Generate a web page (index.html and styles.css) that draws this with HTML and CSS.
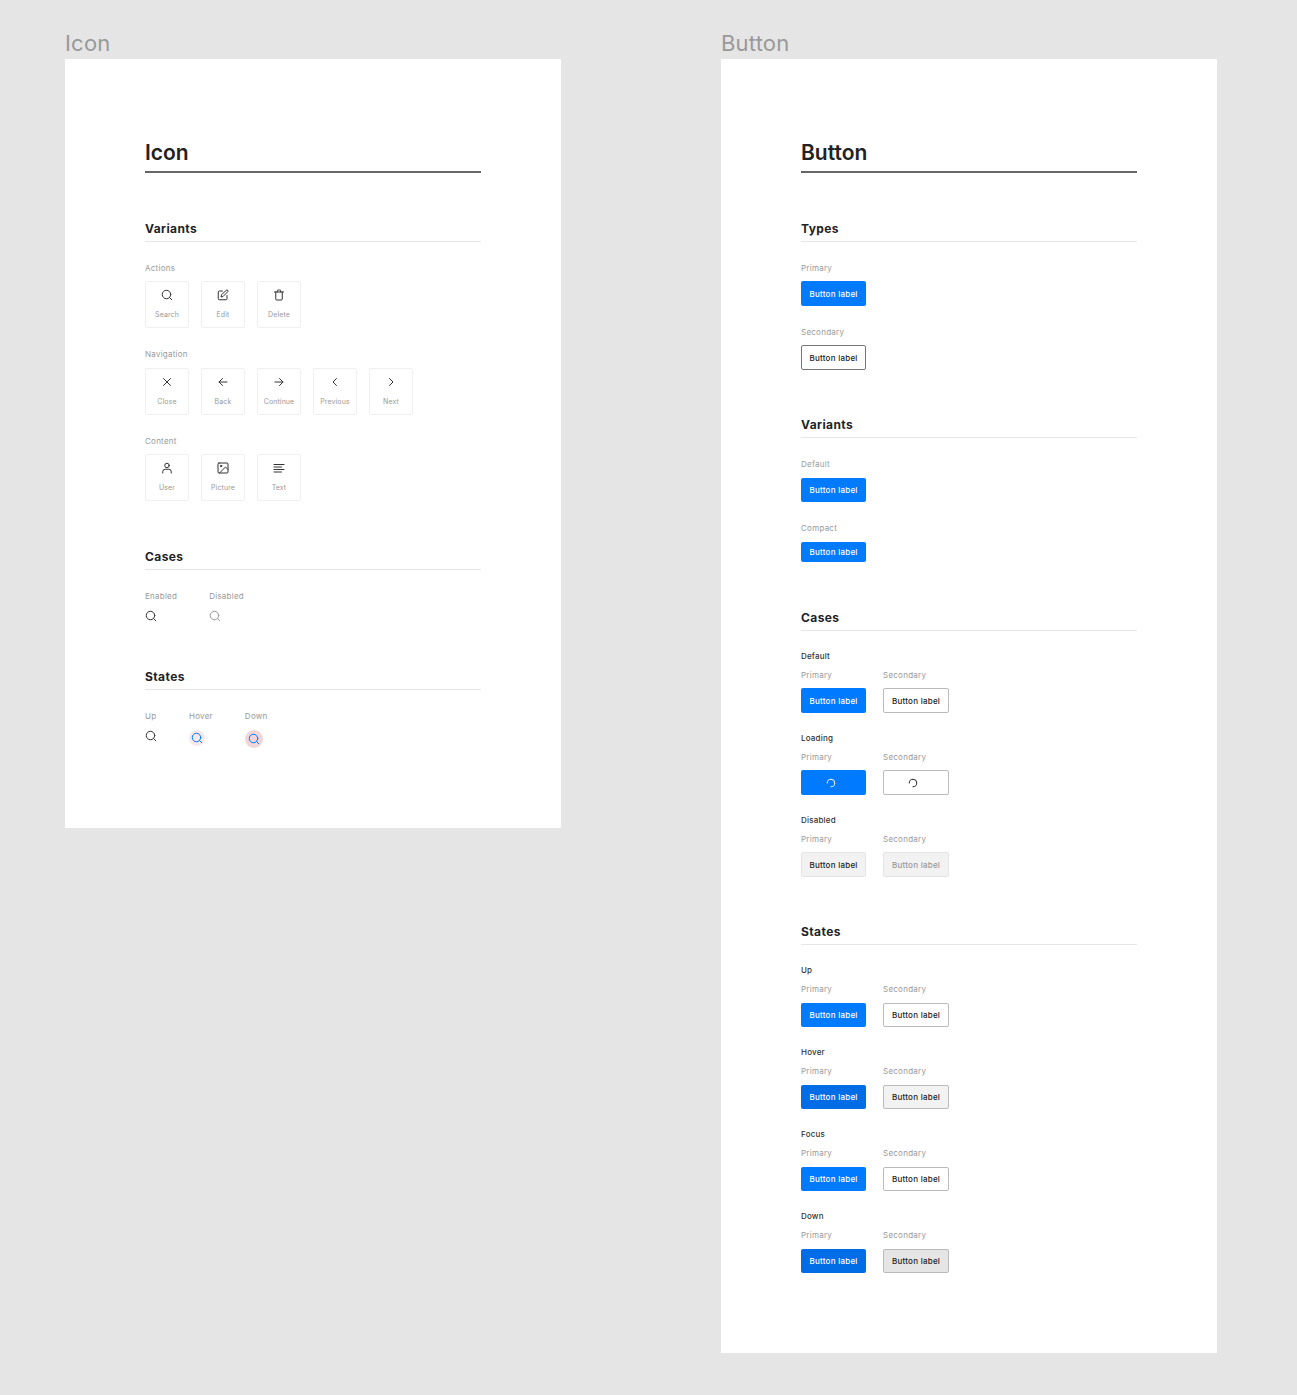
FILE: index.html
```html
<!doctype html>
<html lang="en">
    <head>
        <meta charset="UTF-8" />
        <title>Icon and Button specs</title>
        <link rel="stylesheet" href="styles.css">
    </head>
    <body>
        <svg class="sprite" xmlns="http://www.w3.org/2000/svg">
            <symbol id="i-search" viewBox="0 0 24 24"><circle cx="11" cy="11" r="8.5"/><path d="M17.2 17.2 21.5 21.5"/></symbol>
            <symbol id="i-edit" viewBox="0 0 24 24"><path d="M11 4H4.5A2 2 0 0 0 2.5 6v13.5a2 2 0 0 0 2 2H18a2 2 0 0 0 2-2V13"/><path d="M18.5 2.5a2.1 2.1 0 0 1 3 3L12 15l-4 1 1-4z"/></symbol>
            <symbol id="i-trash" viewBox="0 0 24 24"><path d="M3 6h18"/><path d="M5.5 6v14a2 2 0 0 0 2 2h9a2 2 0 0 0 2-2V6"/><path d="M8.5 6V4a2 2 0 0 1 2-2h3a2 2 0 0 1 2 2v2"/></symbol>
            <symbol id="i-close" viewBox="0 0 24 24"><path d="M5 5 19 19M19 5 5 19"/></symbol>
            <symbol id="i-back" viewBox="0 0 24 24"><path d="M20 12H4M11 5l-7 7 7 7"/></symbol>
            <symbol id="i-next-arrow" viewBox="0 0 24 24"><path d="M4 12h16M13 5l7 7-7 7"/></symbol>
            <symbol id="i-prev" viewBox="0 0 24 24"><path d="M15 5l-7 7 7 7"/></symbol>
            <symbol id="i-next" viewBox="0 0 24 24"><path d="M9 5l7 7-7 7"/></symbol>
            <symbol id="i-user" viewBox="0 0 24 24"><circle cx="12" cy="7" r="4.5"/><path d="M3.5 22v-2.5a5 5 0 0 1 5-5h7a5 5 0 0 1 5 5V22"/></symbol>
            <symbol id="i-picture" viewBox="0 0 24 24"><rect x="2" y="2" width="20" height="20" rx="2"/><circle cx="8" cy="8" r="1.5"/><path d="M22 15l-5-5L5 22"/></symbol>
            <symbol id="i-text" viewBox="0 0 24 24"><path d="M2 5h20M2 10h15M2 15h20M2 20h15"/></symbol>
            <symbol id="i-spin" viewBox="0 0 24 24"><path d="M12 21A9 9 0 1 0 3 12"/></symbol>
        </svg>

        <div class="board">
            <div class="frame-col">
                <div class="frame-name">Icon</div>
                <div class="frame">
                    <h1 class="title">Icon</h1>

                    <section class="section">
                        <h2 class="heading">Variants</h2>
                        <div class="group">
                            <div class="label">Actions</div>
                            <div class="tiles">
                                <div class="tile"><svg class="icon"><use href="#i-search"/></svg><span>Search</span></div>
                                <div class="tile"><svg class="icon"><use href="#i-edit"/></svg><span>Edit</span></div>
                                <div class="tile"><svg class="icon"><use href="#i-trash"/></svg><span>Delete</span></div>
                            </div>
                        </div>
                        <div class="group">
                            <div class="label label-wide">Navigation</div>
                            <div class="tiles">
                                <div class="tile"><svg class="icon"><use href="#i-close"/></svg><span>Close</span></div>
                                <div class="tile"><svg class="icon"><use href="#i-back"/></svg><span>Back</span></div>
                                <div class="tile"><svg class="icon"><use href="#i-next-arrow"/></svg><span>Continue</span></div>
                                <div class="tile"><svg class="icon"><use href="#i-prev"/></svg><span>Previous</span></div>
                                <div class="tile"><svg class="icon"><use href="#i-next"/></svg><span>Next</span></div>
                            </div>
                        </div>
                        <div class="group">
                            <div class="label">Content</div>
                            <div class="tiles">
                                <div class="tile"><svg class="icon"><use href="#i-user"/></svg><span>User</span></div>
                                <div class="tile"><svg class="icon"><use href="#i-picture"/></svg><span>Picture</span></div>
                                <div class="tile"><svg class="icon"><use href="#i-text"/></svg><span>Text</span></div>
                            </div>
                        </div>
                    </section>

                    <section class="section">
                        <h2 class="heading">Cases</h2>
                        <div class="group">
                            <div class="cols">
                                <div>
                                    <div class="label label-wide">Enabled</div>
                                    <svg class="icon"><use href="#i-search"/></svg>
                                </div>
                                <div>
                                    <div class="label label-wide">Disabled</div>
                                    <svg class="icon icon-disabled"><use href="#i-search"/></svg>
                                </div>
                            </div>
                        </div>
                    </section>

                    <section class="section section-tight">
                        <h2 class="heading">States</h2>
                        <div class="group">
                            <div class="cols">
                                <div>
                                    <div class="label label-wide">Up</div>
                                    <svg class="icon"><use href="#i-search"/></svg>
                                </div>
                                <div>
                                    <div class="label label-wide">Hover</div>
                                    <div class="halo halo-hover"><svg class="icon"><use href="#i-search"/></svg></div>
                                </div>
                                <div>
                                    <div class="label label-wide">Down</div>
                                    <div class="halo halo-down"><svg class="icon"><use href="#i-search"/></svg></div>
                                </div>
                            </div>
                        </div>
                    </section>
                </div>
            </div>

            <div class="frame-col">
                <div class="frame-name">Button</div>
                <div class="frame">
                    <h1 class="title">Button</h1>

                    <section class="section">
                        <h2 class="heading">Types</h2>
                        <div class="group">
                            <div class="label">Primary</div>
                            <button class="btn btn-primary">Button label</button>
                        </div>
                        <div class="group">
                            <div class="label">Secondary</div>
                            <button class="btn btn-outline">Button label</button>
                        </div>
                    </section>

                    <section class="section section-tight section-slim">
                        <h2 class="heading">Variants</h2>
                        <div class="group">
                            <div class="label">Default</div>
                            <button class="btn btn-primary">Button label</button>
                        </div>
                        <div class="group">
                            <div class="label">Compact</div>
                            <button class="btn btn-primary btn-compact">Button label</button>
                        </div>
                    </section>

                    <section class="section">
                        <h2 class="heading">Cases</h2>
                        <div class="case">
                            <div class="case-name">Default</div>
                            <div class="pair">
                                <div><div class="label">Primary</div><button class="btn btn-primary">Button label</button></div>
                                <div><div class="label">Secondary</div><button class="btn btn-secondary">Button label</button></div>
                            </div>
                        </div>
                        <div class="case">
                            <div class="case-name">Loading</div>
                            <div class="pair">
                                <div><div class="label">Primary</div><button class="btn btn-primary"><svg class="spin"><use href="#i-spin"/></svg></button></div>
                                <div><div class="label">Secondary</div><button class="btn btn-secondary"><svg class="spin"><use href="#i-spin"/></svg></button></div>
                            </div>
                        </div>
                        <div class="case">
                            <div class="case-name">Disabled</div>
                            <div class="pair">
                                <div><div class="label">Primary</div><button class="btn btn-disabled">Button label</button></div>
                                <div><div class="label">Secondary</div><button class="btn btn-disabled btn-disabled-muted">Button label</button></div>
                            </div>
                        </div>
                    </section>

                    <section class="section section-tight section-slim">
                        <h2 class="heading">States</h2>
                        <div class="case">
                            <div class="case-name">Up</div>
                            <div class="pair">
                                <div><div class="label">Primary</div><button class="btn btn-primary">Button label</button></div>
                                <div><div class="label">Secondary</div><button class="btn btn-secondary">Button label</button></div>
                            </div>
                        </div>
                        <div class="case">
                            <div class="case-name">Hover</div>
                            <div class="pair">
                                <div><div class="label">Primary</div><button class="btn btn-primary-dark">Button label</button></div>
                                <div><div class="label">Secondary</div><button class="btn btn-secondary-hover">Button label</button></div>
                            </div>
                        </div>
                        <div class="case">
                            <div class="case-name">Focus</div>
                            <div class="pair">
                                <div><div class="label">Primary</div><button class="btn btn-primary">Button label</button></div>
                                <div><div class="label">Secondary</div><button class="btn btn-secondary">Button label</button></div>
                            </div>
                        </div>
                        <div class="case">
                            <div class="case-name">Down</div>
                            <div class="pair">
                                <div><div class="label">Primary</div><button class="btn btn-primary-dark">Button label</button></div>
                                <div><div class="label">Secondary</div><button class="btn btn-secondary-down">Button label</button></div>
                            </div>
                        </div>
                    </section>
                </div>
            </div>
        </div>
    </body>
</html>
```

FILE: styles.css
```css
html {
    background-color: #e5e5e5;
}

body {
    font-family: Inter, "Liberation Sans", sans-serif;
    margin: 0;
    padding: 0;
}

.sprite {
    display: none;
}

.board {
    display: flex;
    gap: 160px;
    padding: 29px 0 42px 65px;
}

.frame-col {
    width: 496px;
}

.frame-name {
    margin-bottom: 2px;
    font-size: 22px;
    line-height: 28px;
    letter-spacing: 0.2px;
    color: #999;
}

.frame {
    background-color: #fff;
    padding: 80px;
}

.title {
    margin: 0;
    padding: 1px 0 5px;
    border-bottom: 2px solid #666;
    font-size: 21px;
    line-height: 26px;
    font-weight: 600;
    color: #222;
}

.section {
    margin-top: 48px;
}

.section-tight {
    margin-top: 47px;
}

.heading {
    margin: 0;
    padding-bottom: 4px;
    border-bottom: 1px solid #e5e5e5;
    font-size: 12px;
    line-height: 16px;
    font-weight: 700;
    letter-spacing: 0.4px;
    color: #222;
}

.group {
    margin-top: 20px;
}

.label {
    margin-bottom: 7px;
    font-size: 8px;
    line-height: 12px;
    letter-spacing: 0.25px;
    color: #999;
}

.label-wide,
.section-slim .label {
    margin-bottom: 8px;
}

.tiles {
    display: flex;
    gap: 12px;
}

.tile {
    box-sizing: border-box;
    width: 44px;
    height: 47px;
    padding-top: 7px;
    border: 1px solid #f0f0f0;
    border-radius: 2px;
    display: flex;
    flex-direction: column;
    align-items: center;
    gap: 8px;
    font-size: 7px;
    line-height: 12px;
    letter-spacing: 0.1px;
    color: #999;
}

.icon {
    display: block;
    width: 12px;
    height: 12px;
    fill: none;
    stroke: #333;
    stroke-width: 2;
    stroke-linecap: round;
    stroke-linejoin: round;
}

.icon-disabled {
    stroke: #999;
}

.cols {
    display: flex;
    gap: 32px;
}

.halo {
    width: 16px;
    height: 16px;
    border-radius: 50%;
    display: flex;
    align-items: center;
    justify-content: center;
}

.halo .icon {
    stroke: #007aff;
}

.halo-hover {
    background-color: #f7e8ee;
}

.halo-down {
    width: 18px;
    height: 18px;
    background-color: #f0d6db;
}

.btn {
    box-sizing: border-box;
    width: 65px;
    height: 25px;
    padding: 0;
    border: 1px solid transparent;
    border-radius: 2px;
    display: flex;
    align-items: center;
    justify-content: center;
    font-family: inherit;
    font-size: 8px;
    font-weight: 500;
    line-height: 12px;
    letter-spacing: 0.25px;
}

.section-slim .btn {
    height: 24px;
}

.btn-primary {
    background-color: #007aff;
    color: #fff;
}

.btn-primary-dark {
    background-color: #006de6;
    color: #fff;
}

.section-slim .btn-compact {
    height: 20px;
}

.btn-outline {
    background-color: #fff;
    border-color: #777;
    color: #222;
}

.btn-secondary {
    width: 66px;
    background-color: #fff;
    border-color: #bbb;
    color: #222;
}

.btn-secondary-hover {
    width: 66px;
    background-color: #f2f2f2;
    border-color: #bbb;
    color: #222;
}

.btn-secondary-down {
    width: 66px;
    background-color: #e5e5e5;
    border-color: #bbb;
    color: #222;
}

.btn-disabled {
    background-color: #f2f2f2;
    border-color: #e5e5e5;
    color: #222;
}

.btn-disabled-muted {
    width: 66px;
    color: #999;
}

.spin {
    width: 10px;
    height: 10px;
    margin-right: 6px;
    fill: none;
    stroke: currentColor;
    stroke-width: 2.4;
    stroke-linecap: round;
}

.case {
    margin-top: 19px;
}

.case-name {
    margin-bottom: 7px;
    font-size: 8px;
    line-height: 12px;
    font-weight: 500;
    letter-spacing: 0.2px;
    color: #333;
}

.pair {
    display: flex;
    gap: 17px;
}
```
